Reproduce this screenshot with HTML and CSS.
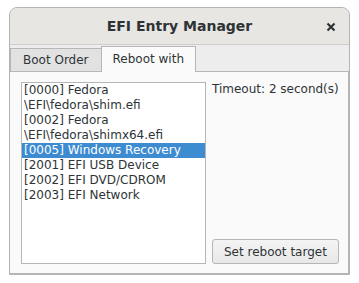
FILE: index.html
```html
<!DOCTYPE html>
<html lang="en">
<head>
  <meta charset="UTF-8">
  <title>EFI Entry Manager</title>
  <link rel="stylesheet" href="styles.css">
</head>
<body>
  <div class="window">
    <div class="titlebar">
      <span class="title">EFI Entry Manager</span>
      <svg class="close" width="10" height="10" viewBox="0 0 10 10">
        <path d="M1.5 1.5 L8.5 8.5 M8.5 1.5 L1.5 8.5" stroke="#2e3436" stroke-width="2.2" fill="none"/>
      </svg>
    </div>
    <div class="notebook">
      <div class="tabs">
        <div class="tab">Boot Order</div>
        <div class="tab active">Reboot with</div>
      </div>
      <div class="panel">
        <ul class="entries">
          <li>[0000] Fedora</li>
          <li>\EFI\fedora\shim.efi</li>
          <li>[0002] Fedora</li>
          <li>\EFI\fedora\shimx64.efi</li>
          <li class="selected">[0005] Windows Recovery</li>
          <li>[2001] EFI USB Device</li>
          <li>[2002] EFI DVD/CDROM</li>
          <li>[2003] EFI Network</li>
        </ul>
        <div class="side">
          <div class="timeout">Timeout: 2 second(s)</div>
          <button class="set-button">Set reboot target</button>
        </div>
      </div>
    </div>
  </div>
</body>
</html>
```

FILE: styles.css
```css
body {
  margin: 0; background: #ffffff; font-family: "DejaVu Sans", sans-serif;
  font-size: 12px; color: #2e3436; }
.window {
  margin: 7px 0 0 9px; width: 339px; height: 266px; border: 1px solid #b4b4b4;
  border-radius: 8px 8px 0 0; background: #ededed; display: flex; flex-direction: column; }
.titlebar {
  height: 36px; flex: none; background: #e8e6e3; border-bottom: 1px solid #d0cdc9;
  border-radius: 8px 8px 0 0; display: flex; align-items: center; justify-content: center;
  position: relative; }
.title { font-weight: bold; font-size: 14px; color: #2e3436; }
.close { position: absolute; right: 13px; top: 14px; }
.notebook { flex: 1; display: flex; flex-direction: column; }
.tabs { display: flex; align-items: flex-end; height: 26px; flex: none; }
.tab {
  height: 22px; line-height: 22px; padding: 0 12px; border: 1px solid #b6b6b6;
  border-bottom: none; background: #e2e2e2; color: #2e3436; }
.tab:first-child { border-right: none; }
.tab.active {
  height: 25px; line-height: 25px; padding: 0 11px; background: #fafafa;
  position: relative; top: 1px; }
.panel {
  flex: 1; background: #fafafa; border: 1px solid #b6b6b6; border-left: none;
  display: flex; padding: 10px 10px 9px 11px; gap: 6px; }
.entries {
  list-style: none; margin: 0; padding: 0; width: 183px; flex: none;
  border: 1px solid #b6b6b6; background: #ffffff; }
.entries li { height: 15px; line-height: 15px; padding-left: 2px; color: #2e3436; }
.entries li.selected { background: #3d8bd0; color: #ffffff; }
.side { flex: 1; display: flex; flex-direction: column; justify-content: space-between; }
.timeout { white-space: nowrap; }
.set-button {
  align-self: flex-start; height: 25px; padding: 0 11px; border: 1px solid #b6b6b6;
  border-radius: 3px; background: linear-gradient(#f4f4f4, #e8e8e8); font-family: inherit;
  font-size: 12px; color: #2e3436; white-space: nowrap; }
```
